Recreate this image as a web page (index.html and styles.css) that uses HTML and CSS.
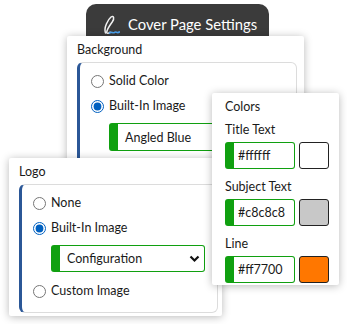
FILE: index.html
```html
<!DOCTYPE html>
<html lang="en">
<head>
    <meta charset="UTF-8">
    <title>Cover Page Settings</title>
    <link rel="stylesheet" href="styles.css">
</head>
<body>
    <div class="canvas">
        <div class="titlebar">
            <svg class="sign" width="18" height="20" viewBox="0 0 18 20">
                <path d="M3.5 18 C 1.5 13, 6 4.5, 9 2 C 11.7 0.2, 12.8 3.2, 10.2 7 C 7.6 10.6, 4.6 14.6, 4.8 17.4 C 5 18.8, 6.6 18.5, 8.2 17.2" fill="none" stroke="#f2f2f2" stroke-width="1.5" stroke-linecap="round"/>
                <path d="M7.6 18 C 9.6 15.8, 10.6 19, 12.6 17.3 C 14.1 16, 15.1 18.8, 17.3 17" fill="none" stroke="#4da3f0" stroke-width="1.7" stroke-linecap="round"/>
            </svg>
            <span>Cover Page Settings</span>
        </div>

        <div class="window win-bg">
            <div class="heading">Background</div>
            <div class="group">
                <label class="opt"><input type="radio" name="bg"> Solid Color</label>
                <label class="opt"><input type="radio" name="bg" checked> Built-In Image</label>
                <div class="pick">Angled Blue</div>
            </div>
        </div>

        <div class="window win-logo">
            <div class="heading">Logo</div>
            <div class="group">
                <label class="opt"><input type="radio" name="logo"> None</label>
                <label class="opt"><input type="radio" name="logo" checked> Built-In Image</label>
                <div class="pick pick-select">
                    <span>Configuration</span>
                    <svg width="11" height="8" viewBox="0 0 11 8"><path d="M1.5 1.5 L5.5 5.5 L9.5 1.5" fill="none" stroke="#111" stroke-width="2.2"/></svg>
                </div>
                <label class="opt"><input type="radio" name="logo"> Custom Image</label>
            </div>
        </div>

        <div class="window win-colors">
            <div class="heading">Colors</div>
            <div class="field">
                <div class="label">Title Text</div>
                <div class="row"><div class="hex">#ffffff</div><div class="swatch" style="background:#ffffff"></div></div>
            </div>
            <div class="field">
                <div class="label">Subject Text</div>
                <div class="row"><div class="hex">#c8c8c8</div><div class="swatch" style="background:#c8c8c8"></div></div>
            </div>
            <div class="field">
                <div class="label">Line</div>
                <div class="row"><div class="hex">#ff7700</div><div class="swatch" style="background:#ff7700"></div></div>
            </div>
        </div>
    </div>
</body>
</html>
```

FILE: styles.css
```css
body { margin: 0; background: #fff; font-family: Lato, "Noto Sans", sans-serif; font-size: 12.5px; color: #1a1a1a; }
.canvas { position: relative; width: 347px; height: 324px; overflow: hidden; }

.titlebar { position: absolute; left: 86px; top: 4px; width: 183px; height: 40px; background: #3b3b3b; border-radius: 10px 10px 0 0; color: #fff; font-size: 14.8px; display: flex; align-items: flex-start; padding-top: 10px; box-sizing: border-box; }
.titlebar .sign { margin: 1px 8px 0 16px; }
.titlebar span { line-height: 20px; }

.window { position: absolute; background: #fff; box-shadow: 0 1px 8px rgba(0,0,0,0.28); border-radius: 2px; box-sizing: border-box; padding: 6px 5px 4px 10px; display: flex; flex-direction: column; gap: 4px; }
.heading { line-height: 16px; }
.win-bg { left: 67px; top: 36px; width: 237px; height: 150px; padding-right: 7px; }
.win-logo { left: 9px; top: 158px; width: 213px; height: 158px; padding-right: 4px; }
.win-colors { left: 212px; top: 93px; width: 127px; height: 192px; padding: 6px 10px 6px 13px; gap: 7px; }

.group { border: 1px solid #dcdcdc; border-left: 3px solid #2b5797; border-radius: 6px; padding: 10px 12px 13px 11px; display: flex; flex-direction: column; gap: 9px; }
.win-bg .group { flex: 1; }
.opt { display: flex; align-items: center; gap: 5px; line-height: 16px; }
.opt input { margin: 0; width: 13px; height: 13px; accent-color: #0060c0; }
.pick { margin-left: 18px; height: 27px; border: 1px solid #10a010; border-left: 9px solid #10a010; border-radius: 3px; box-sizing: border-box; display: flex; align-items: center; justify-content: space-between; padding: 0 4px 0 7px; margin-bottom: 2px; }
.win-bg .pick { height: 28px; margin-right: -20px; }
.pick-select svg { margin-top: 1px; }

.field { display: flex; flex-direction: column; gap: 4px; }
.field + .field { margin-top: 3px; }
.label { line-height: 16px; }
.row { display: flex; gap: 4px; }
.hex { width: 70px; height: 27px; box-sizing: border-box; border: 1px solid #10a010; border-left: 9px solid #10a010; border-radius: 3px; padding-left: 4px; line-height: 25px; }
.swatch { width: 30px; height: 27px; box-sizing: border-box; border: 1px solid #222; border-radius: 3px; }
```
